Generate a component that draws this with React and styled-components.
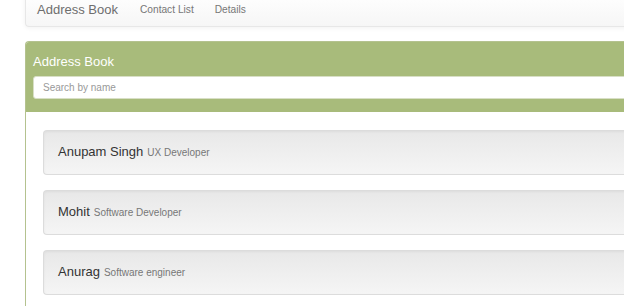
import styled, { createGlobalStyle } from "styled-components";

const contacts = [
  { name: "Anupam Singh", role: "UX Developer" },
  { name: "Mohit", role: "Software Developer" },
  { name: "Anurag", role: "Software engineer" },
];

const App = () => {
  return (
    <>
      <GlobalStyle />
      <Page>
        <Navbar>
          <Brand>Address Book</Brand>
          <NavLink>Contact List</NavLink>
          <NavLink>Details</NavLink>
        </Navbar>
        <Panel>
          <PanelHeading>
            <PanelTitle>Address Book</PanelTitle>
            <Search placeholder="Search by name" />
          </PanelHeading>
          <PanelBody>
            {contacts.map((c) => (
              <Well key={c.name}>
                <Name>{c.name}</Name>
                <Role>{c.role}</Role>
              </Well>
            ))}
          </PanelBody>
        </Panel>
      </Page>
    </>
  );
};

export default App;

const GlobalStyle = createGlobalStyle`
  html, body {
    margin: 0;
    padding: 0;
    background: #fff;
    overflow: hidden;
  }
  body {
    font-family: "Liberation Sans", Arial, sans-serif;
    color: #333;
  }
`;

const Page = styled.div`
  width: 720px;
  padding-left: 25px;
`;

const Navbar = styled.div`
  display: flex;
  align-items: center;
  height: 33px;
  margin-top: -8px;
  margin-bottom: 14px;
  padding-left: 11px;
  background-image: linear-gradient(to bottom, #ffffff 0%, #f6f6f6 100%);
  border: 1px solid #e7e7e7;
  border-right: none;
  border-radius: 0 0 0 4px;
  box-shadow: inset 0 1px 0 rgba(255, 255, 255, 0.15), 0 1px 5px rgba(0, 0, 0, 0.06);
`;

const Brand = styled.span`
  font-size: 13px;
  color: #6e6e6e;
  margin-right: 22px;
`;

const NavLink = styled.a`
  font-size: 10.2px;
  color: #777;
  margin-right: 21px;
  cursor: pointer;
`;

const Panel = styled.div`
  border: 1px solid #b4c28f;
  border-right: none;
  border-radius: 4px 0 0 4px;
  background: #fff;
`;

const PanelHeading = styled.div`
  background: #a8bb7b;
  padding: 11px 0 13px 7px;
  border-radius: 3px 0 0 0;
`;

const PanelTitle = styled.div`
  color: #fff;
  font-size: 13px;
  line-height: 17px;
  margin-bottom: 6px;
`;

const Search = styled.input`
  display: block;
  box-sizing: border-box;
  width: 100%;
  height: 23px;
  border: 1px solid #d8dfc6;
  border-radius: 3px;
  padding: 0 9px;
  font-family: "Liberation Sans", Arial, sans-serif;
  font-size: 10px;
  color: #555;
  outline: none;
  &::placeholder {
    color: #999;
  }
`;

const PanelBody = styled.div`
  padding: 18px 0 10px 17px;
`;

const Well = styled.div`
  display: flex;
  align-items: baseline;
  box-sizing: border-box;
  height: 45px;
  padding: 13px 14px 0;
  margin-bottom: 15px;
  background-image: linear-gradient(to bottom, #e8e8e8 0%, #f5f5f5 100%);
  border: 1px solid #dcdcdc;
  border-right: none;
  border-radius: 4px 0 0 4px;
  box-shadow: inset 0 1px 3px rgba(0, 0, 0, 0.05), 0 1px 0 rgba(255, 255, 255, 0.1);
`;

const Name = styled.span`
  font-size: 13px;
  color: #333;
  margin-right: 4px;
`;

const Role = styled.span`
  font-size: 10px;
  color: #777;
`;
